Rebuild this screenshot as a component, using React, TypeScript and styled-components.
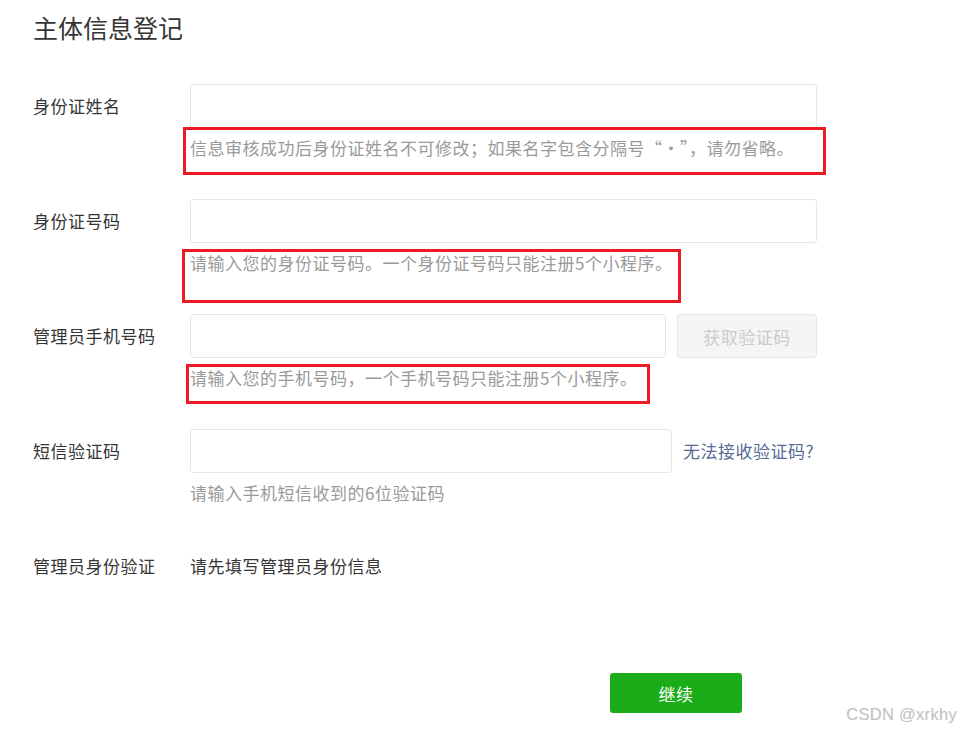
import React from "react";
import styled, { createGlobalStyle } from "styled-components";

const GlobalStyle = createGlobalStyle`
  html, body {
    margin: 0;
    padding: 0;
    background: #ffffff;
  }
  body {
    font-family: "Noto Sans CJK SC", "Noto Sans", sans-serif;
    color: #353535;
  }
`;

const Page = styled.div`
  position: relative;
  width: 960px;
  height: 732px;
  box-sizing: border-box;
  padding: 10px 0 0 33px;
  overflow: hidden;
`;

const Title = styled.h2`
  margin: 0;
  font-size: 25px;
  font-weight: 400;
  line-height: 34px;
  color: #353535;
`;

const Form = styled.div`
  margin-top: 40px;
  display: flex;
  flex-direction: column;
`;

const Field = styled.div<{ $height?: number }>`
  display: grid;
  grid-template-columns: 157px 627px;
  height: ${(p) => p.$height ?? 115}px;
`;

const Label = styled.div`
  font-size: 17px;
  letter-spacing: 0.5px;
  line-height: 44px;
  height: 44px;
  color: #353535;
  white-space: nowrap;
`;

const Controls = styled.div`
  display: flex;
  flex-direction: column;
`;

const InputRow = styled.div`
  display: flex;
  align-items: center;
  gap: 11px;
`;

const TextInput = styled.input<{ $width: number }>`
  width: ${(p) => p.$width}px;
  height: 44px;
  box-sizing: border-box;
  border: 1px solid #e7e7eb;
  border-radius: 3px;
  background: #fff;
  padding: 0 10px;
  font-family: inherit;
  font-size: 17px;
  outline: none;
`;

const CodeButton = styled.button`
  width: 140px;
  height: 44px;
  box-sizing: border-box;
  border: 1px solid #e4e8eb;
  border-radius: 3px;
  background: #f4f5f5;
  color: #cbcbcb;
  font-family: inherit;
  font-size: 17px;
  letter-spacing: 0.5px;
  padding: 0;
`;

const HelpLink = styled.a`
  color: #576b95;
  font-size: 17px;
  letter-spacing: 0.5px;
  text-decoration: none;
  white-space: nowrap;
  line-height: 44px;
`;

const Tip = styled.div`
  position: relative;
  margin-top: 8px;
  font-size: 17px;
  letter-spacing: 0.5px;
  line-height: 24px;
  color: #9a9a9a;
  white-space: nowrap;
`;

const Highlight = styled.span<{ $left: number; $top: number; $width: number; $height: number }>`
  position: absolute;
  left: ${(p) => p.$left}px;
  top: ${(p) => p.$top}px;
  width: ${(p) => p.$width}px;
  height: ${(p) => p.$height}px;
  box-sizing: border-box;
  border: 3px solid #ed1c24;
  pointer-events: none;
`;

const Value = styled.div`
  font-size: 17px;
  letter-spacing: 0.5px;
  line-height: 44px;
  color: #353535;
  white-space: nowrap;
`;

const Footer = styled.div`
  margin-top: 85px;
  padding-left: 577px;
`;

const PrimaryButton = styled.button`
  width: 132px;
  height: 40px;
  border: none;
  border-radius: 3px;
  background: #1aad19;
  color: #ffffff;
  font-family: inherit;
  font-size: 17px;
  letter-spacing: 0.5px;
  padding: 0;
`;

const Watermark = styled.div`
  position: absolute;
  right: 3px;
  top: 703px;
  font-family: "Liberation Sans", Arial, sans-serif;
  font-size: 16.5px;
  line-height: 22px;
  color: #c2c2c2;
  text-shadow: 0 0 1px rgba(0, 0, 0, 0.08);
  letter-spacing: 0.3px;
`;

export default function App() {
  return (
    <>
      <GlobalStyle />
      <Page>
        <Title>主体信息登记</Title>
        <Form>
          <Field>
            <Label>身份证姓名</Label>
            <Controls>
              <InputRow>
                <TextInput $width={627} />
              </InputRow>
              <Tip>
                信息审核成功后身份证姓名不可修改；如果名字包含分隔号“·”，请勿省略。
                <Highlight $left={-7} $top={-9} $width={643} $height={48} />
              </Tip>
            </Controls>
          </Field>
          <Field>
            <Label>身份证号码</Label>
            <Controls>
              <InputRow>
                <TextInput $width={627} />
              </InputRow>
              <Tip>
                请输入您的身份证号码。一个身份证号码只能注册5个小程序。
                <Highlight $left={-8} $top={-2} $width={499} $height={54} />
              </Tip>
            </Controls>
          </Field>
          <Field>
            <Label>管理员手机号码</Label>
            <Controls>
              <InputRow>
                <TextInput $width={476} />
                <CodeButton disabled>获取验证码</CodeButton>
              </InputRow>
              <Tip>
                请输入您的手机号码，一个手机号码只能注册5个小程序。
                <Highlight $left={-4} $top={-2} $width={464} $height={40} />
              </Tip>
            </Controls>
          </Field>
          <Field>
            <Label>短信验证码</Label>
            <Controls>
              <InputRow>
                <TextInput $width={482} />
                <HelpLink href="#">无法接收验证码?</HelpLink>
              </InputRow>
              <Tip>请输入手机短信收到的6位验证码</Tip>
            </Controls>
          </Field>
          <Field $height={44}>
            <Label>管理员身份验证</Label>
            <Value>请先填写管理员身份信息</Value>
          </Field>
        </Form>
        <Footer>
          <PrimaryButton>继续</PrimaryButton>
        </Footer>
        <Watermark>CSDN @xrkhy</Watermark>
      </Page>
    </>
  );
}
